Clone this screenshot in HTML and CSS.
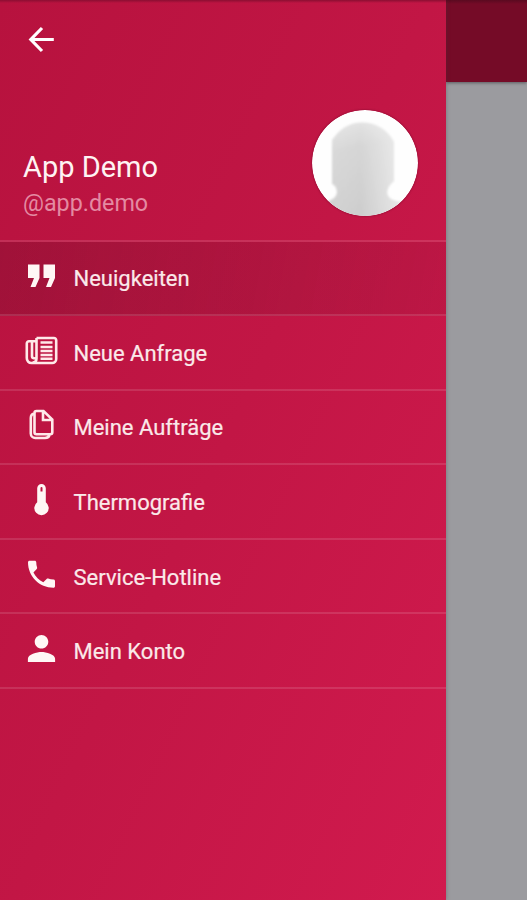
FILE: index.html
```html
<!DOCTYPE html>
<html lang="de">
<head>
<meta charset="utf-8">
<title>App Demo</title>
<link rel="stylesheet" href="styles.css">
</head>
<body>
<div class="screen">
  <aside class="drawer">
    <header class="profile">
      <button class="back" aria-label="Zurück">
        <svg viewBox="0 0 28 28"><path d="M26.800 13.500H4M15 2 3.800 13.500 15 25"/></svg>
      </button>
      <div class="identity">
        <div class="names">
          <div class="name">App Demo</div>
          <div class="handle">@app.demo</div>
        </div>
        <svg class="avatar" viewBox="0 0 106 106">
          <defs>
            <clipPath id="round"><circle cx="53" cy="53" r="53"/></clipPath>
            <linearGradient id="shade" x1="0" y1="0" x2="0.15" y2="1">
              <stop offset="0" stop-color="#e6e6e6"/><stop offset=".3" stop-color="#d6d6d6"/><stop offset="1" stop-color="#cdcdcd"/>
            </linearGradient>
            <linearGradient id="side"><stop offset="0" stop-color="#fff" stop-opacity=".1"/><stop offset=".45" stop-color="#fff" stop-opacity="0"/><stop offset="1" stop-color="#fff" stop-opacity=".6"/></linearGradient>
            <filter id="soft" x="-20%" y="-20%" width="140%" height="140%"><feGaussianBlur stdDeviation="1.300"/></filter>
          </defs>
          <g clip-path="url(#round)">
            <rect width="106" height="106" fill="#fefefe"/>
            <g filter="url(#soft)">
              <path d="M20 74V30C27 20 36 12.500 50 12.500S76 20 82 32V71C73 78 72 88 84 91L94 93V112H12V94L22 88C27 84 25 76 20 74Z" fill="url(#shade)"/>
              <path d="M20 74V30C27 20 36 12.500 50 12.500S76 20 82 32V71C73 78 72 88 84 91L94 93V112H12V94L22 88C27 84 25 76 20 74Z" fill="url(#side)"/>
            </g>
          </g>
        </svg>
      </div>
    </header>
    <nav class="menu">
      <a class="item active"><svg class="icon" viewBox="0 0 36 36"><path d="M5 6.500H16.500V20L12.500 29H7.500L11 20H5ZM20.500 6.500H32V20L28 29H23L26.500 20H20.500Z"/></svg><span>Neuigkeiten</span></a>
      <a class="item"><svg class="icon line" viewBox="0 0 36 36"><path d="M13.500 5H31a2.200 2.200 0 0 1 2.200 2.200V26a4 4 0 0 1-4 4H8.500A4.700 4.700 0 0 1 3.800 25V10.500A2.200 2.200 0 0 1 6 8.300H13.500M13.500 5V25.500Q13.500 29.500 9.500 29.500M9 9V23.500Q9 25.500 13 25.500M17.500 9.500H29.500M17.500 14H29.500M17.500 18H29.500M17.500 22H29.500M17.500 25.800H29.500"/></svg><span>Neue Anfrage</span></a>
      <a class="item"><svg class="icon line" viewBox="0 0 36 36"><path d="M13.500 4H20.500L29.300 12.500V25.300A2 2 0 0 1 27.300 27.300H13.500A2 2 0 0 1 11.500 25.300V6A2 2 0 0 1 13.500 4ZM20 4.500V13H29M11.500 6.500Q7.800 7 7.800 11V26.500A4.500 4.500 0 0 0 12.300 31H22Q26 31 26.500 27.500"/></svg><span>Meine Aufträge</span></a>
      <a class="item"><svg class="icon" viewBox="0 0 36 36"><path fill-rule="evenodd" d="M14.200 6.300a4.300 4.300 0 0 1 8.600 0V20.200a7.200 7.200 0 1 1-8.600 0ZM17.500 6V9.500H19.500V6a1 1 0 0 0-2 0Z"/></svg><span>Thermografie</span></a>
      <a class="item"><svg class="icon" viewBox="0 0 36 36"><path transform="translate(.5 -.8) scale(1.5)" d="M6.620 10.790c1.440 2.830 3.760 5.140 6.590 6.590l2.200-2.200c.27-.27.67-.36 1.020-.24 1.120.37 2.330.57 3.570.57.55 0 1 .45 1 1V20c0 .55-.45 1-1 1-9.390 0-17-7.610-17-17 0-.55.45-1 1-1h3.500c.55 0 1 .45 1 1 0 1.250.2 2.450.57 3.570.11.35.03.74-.25 1.020l-2.200 2.200z"/></svg><span>Service-Hotline</span></a>
      <a class="item"><svg class="icon" viewBox="0 0 36 36"><path transform="translate(-1.900 -2.900) scale(1.700)" d="M12 12c2.210 0 4-1.790 4-4s-1.790-4-4-4-4 1.790-4 4 1.790 4 4 4zm0 2c-2.670 0-8 1.340-8 4v2h16v-2c0-2.660-5.330-4-8-4z"/></svg><span>Mein Konto</span></a>
    </nav>
  </aside>
  <main class="page">
    <div class="appbar"></div>
  </main>
</div>
</body>
</html>
```
FILE: styles.css
```css
* { box-sizing: border-box; }

body {
  margin: 0;
  font-family: Roboto, "Liberation Sans", sans-serif;
}

.screen {
  display: flex;
  width: 527px;
  height: 900px;
  overflow: hidden;
  background: #9b9b9f;
}

.drawer {
  flex: 0 0 445.500px;
  background:
    linear-gradient(#8c0e32 0, rgba(140, 14, 50, 0) 3px),
    linear-gradient(115deg, #b7123e 0%, #c21645 50%, #d11a4e 100%);
  color: #fbe9ea;
  box-shadow: 0 0 4px rgba(60, 60, 65, .4);
  z-index: 1;
}

.profile {
  display: flex;
  flex-direction: column;
  height: 241.500px;
  padding: 26px 27.500px 0 23px;
  border-bottom: 2px solid rgba(255, 255, 255, .12);
}

.back {
  width: 28px;
  height: 28px;
  margin-left: 4px;
  padding: 0;
  border: 0;
  background: none;
}

.back svg {
  display: block;
  width: 28px;
  height: 28px;
  fill: none;
  stroke: #fff;
  stroke-width: 3.200;
}

.identity {
  display: flex;
  justify-content: space-between;
  margin-top: 56px;
}

.names { padding-top: 39px; }

.name {
  font-size: 29px;
  line-height: 36px;
  color: #fff3f3;
}

.handle {
  font-size: 23.300px;
  line-height: 36px;
  color: #e48aa2;
}

.avatar {
  width: 106px;
  height: 106px;
  border-radius: 50%;
  box-shadow: 0 0 2px rgba(100, 0, 35, .8);
}

.item {
  display: flex;
  align-items: center;
  gap: 14.500px;
  height: 74.600px;
  padding-left: 23px;
  border-bottom: 2px solid rgba(255, 255, 255, .12);
  font-size: 22px;
  -webkit-text-stroke: .2px currentColor;
}

.item.active { background: linear-gradient(100deg, rgba(100, 15, 40, .3), rgba(130, 20, 50, .15)); }

.item span { padding-top: 2px; }

.icon {
  width: 36px;
  height: 36px;
  margin-bottom: 3px;
  fill: #fff7f5;
}

.icon.line {
  fill: none;
  stroke: #ffe9e9;
  stroke-width: 2.600;
}

.page { flex: 1; }

.appbar {
  height: 82px;
  background: linear-gradient(#5a0a20 0, #750b27 4px);
  box-shadow: 0 1px 3px rgba(50, 50, 55, .6);
}
```
